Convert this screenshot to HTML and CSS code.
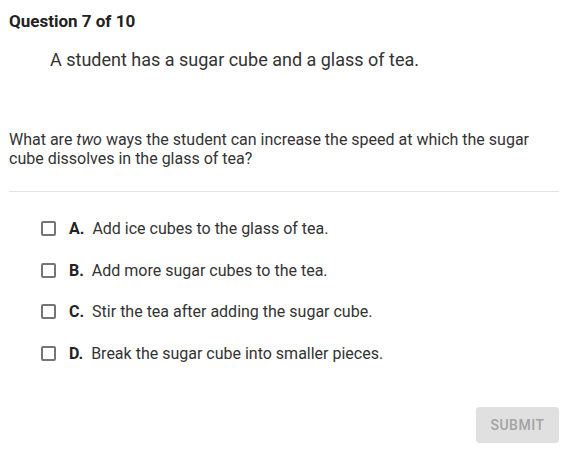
FILE: index.html
```html
<!DOCTYPE html>
<html>
<head>
<meta charset="utf-8">
<link rel="stylesheet" href="styles.css">
</head>
<body>
<div class="page">
  <div class="qnum">Question 7 of 10</div>
  <div class="stimulus">A student has a sugar cube and a glass of tea.</div>
  <div class="prompt">What are <em>two</em> ways the student can increase the speed at which the sugar cube dissolves in the glass of tea?</div>
  <div class="divider"></div>
  <div class="options">
    <div class="opt"><span class="box"></span><span class="letter">A.</span><span class="text">Add ice cubes to the glass of tea.</span></div>
    <div class="opt"><span class="box"></span><span class="letter">B.</span><span class="text">Add more sugar cubes to the tea.</span></div>
    <div class="opt"><span class="box"></span><span class="letter">C.</span><span class="text">Stir the tea after adding the sugar cube.</span></div>
    <div class="opt"><span class="box"></span><span class="letter">D.</span><span class="text">Break the sugar cube into smaller pieces.</span></div>
  </div>
  <div class="footer"><button class="submit">SUBMIT</button></div>
</div>
</body>
</html>
```
FILE: styles.css
```css
html, body { margin: 0; padding: 0; background: #fff; }
body { font-family: Roboto, "Liberation Sans", sans-serif; color: #333; }
.page { width: 571px; height: 468px; box-sizing: border-box; padding: 11px 12px 0 9px; }
.qnum { font-size: 17px; font-weight: 700; color: #222; line-height: 20px; }
.stimulus { font-size: 18px; line-height: 22px; margin: 18px 0 0 41px; color: #333; }
.prompt { font-size: 16px; line-height: 19px; margin-top: 59px; color: #333; }
.prompt em { font-style: italic; }
.divider { height: 1px; background: #e3e3e3; margin-top: 23px; }
.options { display: flex; flex-direction: column; gap: 22.7px; margin-top: 27px; padding-left: 32px; }
.opt { display: flex; align-items: center; height: 19px; font-size: 16px; color: #333; }
.box { width: 11px; height: 11px; border: 2px solid #757575; border-radius: 2px; margin-right: 13px; flex: none; }
.letter { font-weight: 700; color: #222; margin-right: 8px; }
.footer { display: flex; justify-content: flex-end; margin-top: 44px; }
.submit { width: 83px; height: 36px; border: none; border-radius: 4px; background: #e0e0e0; color: #a3a3a3; font-family: Roboto, "Liberation Sans", sans-serif; font-size: 14px; font-weight: 500; letter-spacing: 0.5px; padding: 0; box-shadow: 0 0 1px rgba(0,0,0,0.08); }
```
